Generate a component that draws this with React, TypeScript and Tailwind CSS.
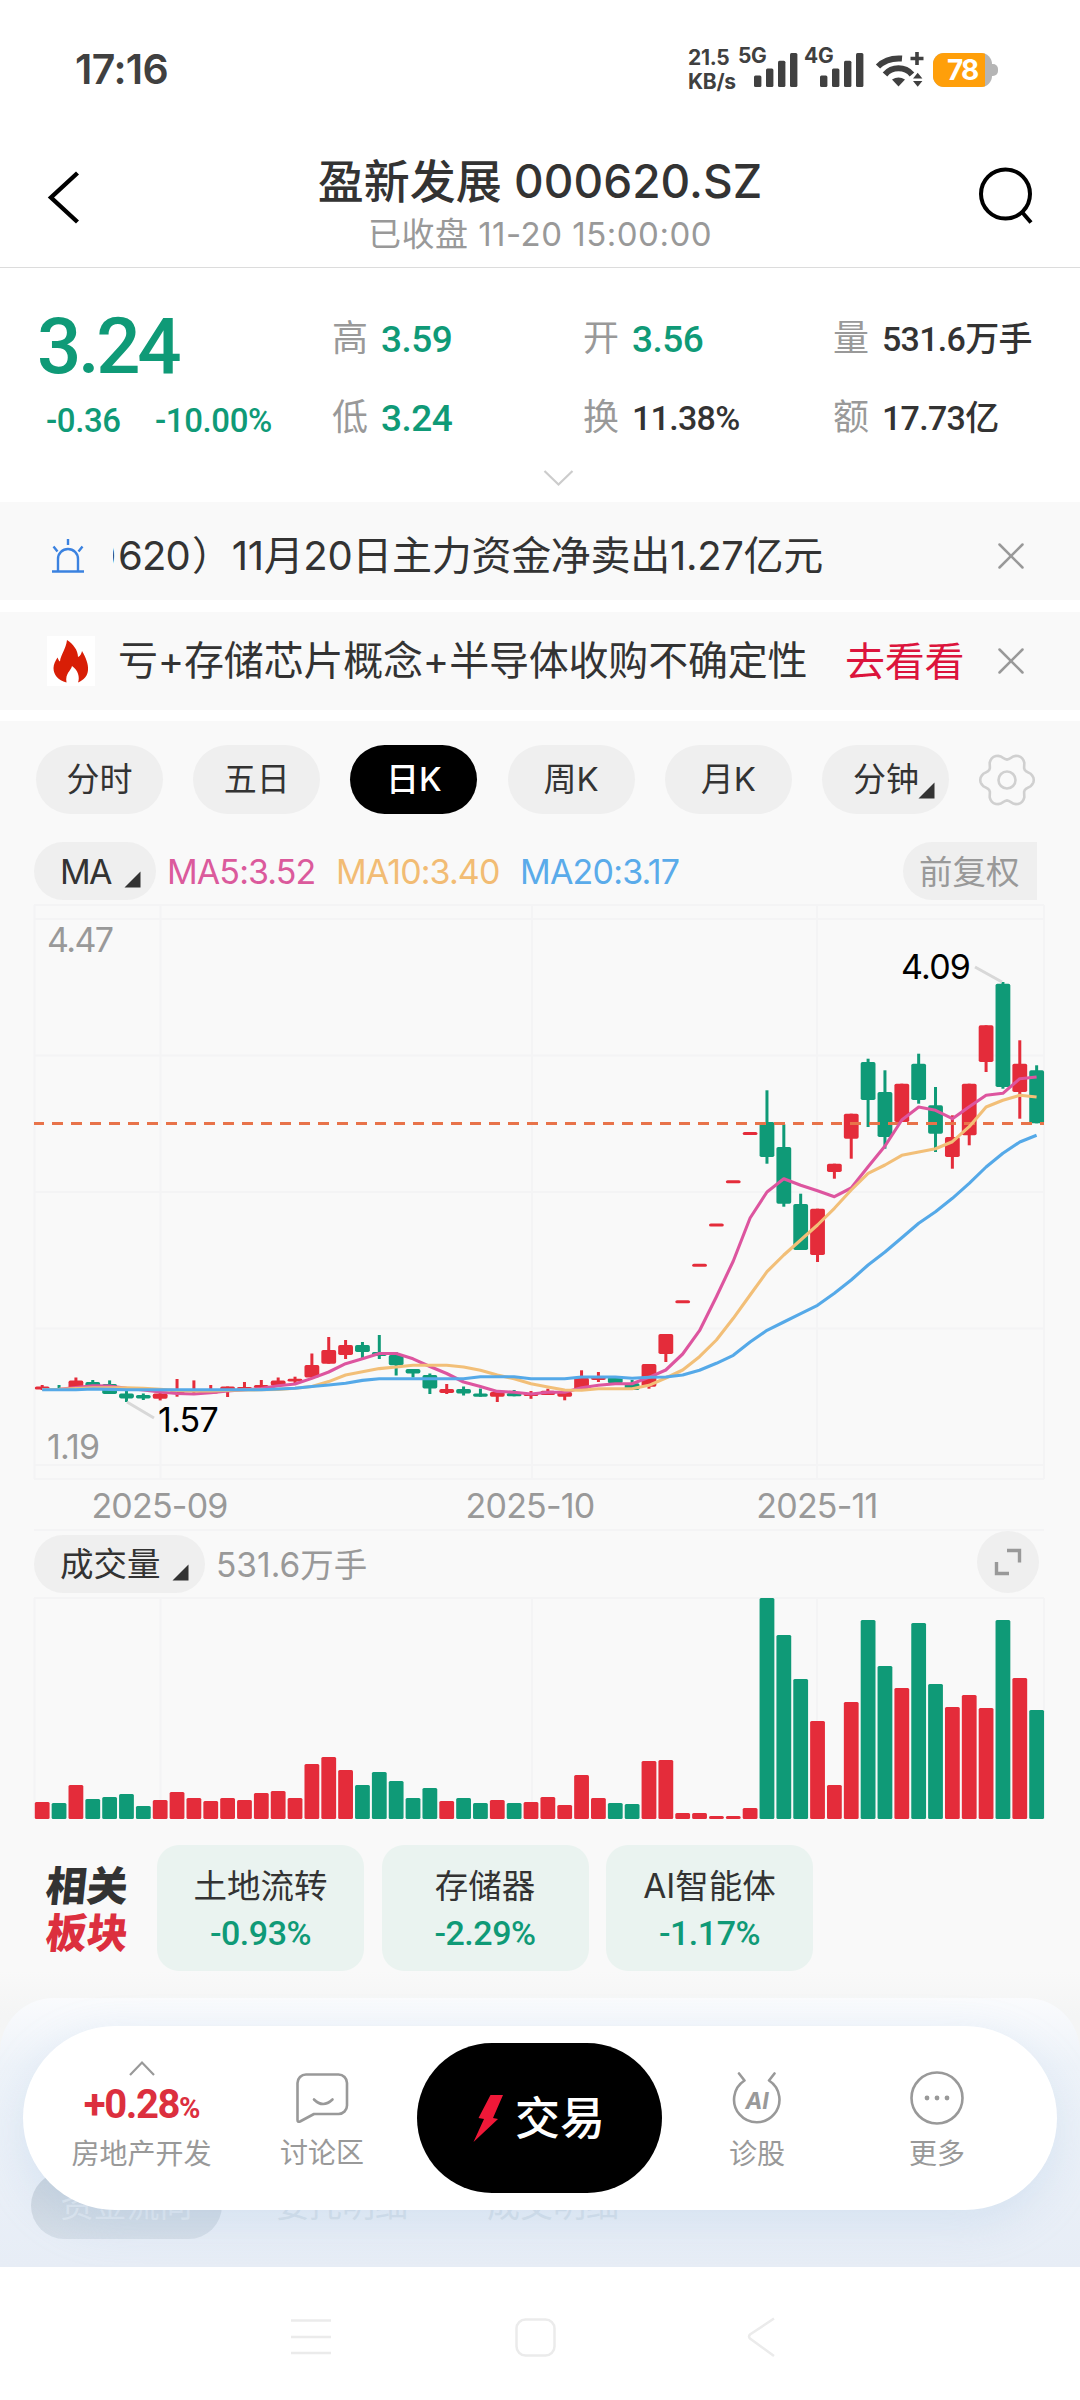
import { X } from "lucide-react"

const UP = "#e42c3a"
const DOWN = "#0f9a77"

// [kind, bodyTop, bodyBottom, high, low]
type Candle = ["r" | "g", number, number, number, number]

const candles: Candle[] = [
    ["r", 1386.5, 1389.5, 1385, 1390],
    ["g", 1388, 1391, 1385, 1391],
    ["r", 1380.4, 1388, 1377.5, 1388],
    ["g", 1382, 1386, 1380, 1387],
    ["g", 1384, 1394, 1380.4, 1394],
    ["g", 1393.5, 1398.4, 1391, 1402],
    ["g", 1395, 1398.4, 1393.5, 1400],
    ["r", 1393.5, 1398.8, 1392, 1400.4],
    ["r", 1391, 1394, 1379, 1396.7],
    ["r", 1390, 1392, 1380.4, 1393],
    ["r", 1390.5, 1393.5, 1385, 1393.5],
    ["r", 1386.5, 1390, 1386.5, 1397],
    ["r", 1387, 1389.5, 1382, 1389.5],
    ["r", 1385, 1388, 1380, 1388],
    ["r", 1380.4, 1385.7, 1377.5, 1386],
    ["r", 1378.8, 1381.6, 1376.7, 1385],
    ["r", 1365, 1377.5, 1353.5, 1377.5],
    ["r", 1350, 1363.7, 1337, 1363.7],
    ["r", 1345, 1355, 1340, 1359],
    ["g", 1345, 1352, 1342, 1358],
    ["g", 1352, 1356, 1335, 1359],
    ["g", 1355, 1365.3, 1352, 1375.5],
    ["g", 1369, 1373.5, 1369, 1377.5],
    ["g", 1375, 1388.6, 1373.5, 1394],
    ["r", 1389, 1393, 1384, 1394],
    ["g", 1389, 1393.5, 1386.5, 1395.5],
    ["g", 1393.5, 1396.7, 1388.6, 1396.7],
    ["r", 1392, 1396.7, 1391, 1402],
    ["g", 1393, 1396.3, 1390, 1396.3],
    ["r", 1393, 1396, 1391, 1398.8],
    ["r", 1390.7, 1395, 1388.7, 1395],
    ["r", 1392, 1396.7, 1392, 1400.3],
    ["r", 1377.7, 1389, 1370.3, 1389],
    ["r", 1377.7, 1380, 1372, 1382],
    ["g", 1377.3, 1383.3, 1377.3, 1383.3],
    ["g", 1383.3, 1390, 1380, 1390],
    ["r", 1364, 1386.7, 1364, 1388.7],
    ["r", 1334, 1354, 1334, 1362],
    ["r", 1300.2, 1303.2, 1301, 1302],
    ["r", 1263.7, 1266.7, 1264, 1265],
    ["r", 1223.6, 1226.6, 1224, 1225],
    ["r", 1180.3, 1183.3, 1181, 1182],
    ["r", 1131.9, 1134.9, 1132, 1133],
    ["g", 1122, 1157, 1090.3, 1163.7],
    ["g", 1147, 1203.7, 1124.3, 1206.7],
    ["g", 1204, 1250, 1193.7, 1250],
    ["r", 1208.7, 1255, 1208.7, 1262],
    ["r", 1163.7, 1172, 1163.7, 1178.7],
    ["r", 1113.7, 1138.7, 1113.7, 1158.7],
    ["g", 1062, 1100, 1058.7, 1127],
    ["g", 1092, 1137, 1070.3, 1148.7],
    ["r", 1083.7, 1122, 1083.7, 1122],
    ["g", 1063.7, 1100, 1053.7, 1103.7],
    ["g", 1105.3, 1133.7, 1087, 1152],
    ["r", 1137, 1157, 1115.3, 1168.7],
    ["r", 1083.7, 1135.3, 1083.7, 1145.3],
    ["r", 1025.3, 1062, 1025.3, 1072],
    ["g", 983.7, 1087, 982, 1088.7],
    ["r", 1063.7, 1092, 1040.3, 1118.7],
    ["g", 1070.3, 1123.3, 1065.3, 1123.3],
]

const ma5 = [
    1389.5, 1389.2, 1387.5, 1385.8, 1386, 1388.3, 1390, 1392, 1393.5, 1394, 1392.6, 1391, 1389.8, 1388.6,
    1385.7, 1384, 1378.4, 1372, 1363.7, 1358.8, 1353.5, 1353.5, 1358.8, 1366.5, 1373.5, 1382, 1386.5, 1391.4,
    1392.2, 1394, 1392.3, 1392.3, 1387.7, 1385.3, 1383.7, 1383.7, 1377.3, 1370, 1354, 1330.7, 1296.7, 1261,
    1218, 1192, 1178.7, 1185.3, 1190.7, 1196.7, 1188, 1166.7, 1146, 1120, 1107, 1110.3, 1118.7, 1106.7,
    1095.3, 1093.3, 1078.7, 1077,
]

const ma10 = [
    1389.5, 1389.3, 1388.5, 1387.7, 1387.7, 1387.8, 1388.2, 1389.4, 1390.5, 1391, 1391, 1390.5, 1390, 1389.8,
    1389.4, 1388.2, 1386.5, 1381.6, 1375, 1371.8, 1368.6, 1367, 1365.3, 1365.3, 1365.3, 1367, 1370.2, 1375,
    1378.8, 1383.7, 1387, 1390, 1390.3, 1388.7, 1388.7, 1388.7, 1385.3, 1378, 1370, 1356.7, 1340, 1318.3,
    1295, 1271.7, 1255, 1240, 1225, 1208.3, 1190, 1173.3, 1165, 1155.3, 1152, 1148.7, 1141.7, 1126.7,
    1107, 1100.3, 1095.3, 1097,
]

const ma20 = [
    1389.8, 1389.8, 1389.8, 1389, 1389.4, 1389.8, 1389.8, 1389.8, 1389.8, 1389.8, 1389.8, 1389.8, 1389.8,
    1389.8, 1389, 1388.2, 1386.5, 1385, 1383.3, 1380.4, 1378.8, 1378.8, 1378.8, 1378.8, 1378.8, 1378.8,
    1376.7, 1376.7, 1376.7, 1378.7, 1378.7, 1378.7, 1377, 1377, 1377, 1378.3, 1377.3, 1377, 1375, 1370.3,
    1363.3, 1355.3, 1342, 1330.3, 1322, 1313.7, 1305.3, 1293.3, 1280, 1265, 1252, 1237.7, 1223.3, 1211.7,
    1198.3, 1183.3, 1167, 1153.3, 1142, 1135.3,
]

const volumes = [
    17, 16, 34, 20, 22, 25, 13, 19, 27, 21, 18, 21, 19, 26, 28, 21, 55, 62, 49, 34, 47, 38, 21, 31, 18, 21, 16,
    19, 16, 17, 22, 14, 44, 21, 16, 15, 58, 59, 6, 6, 3, 3, 11, 221, 184, 140, 98, 34, 117, 199, 153, 131, 196,
    135, 112, 124, 111, 199, 141, 109,
]

const cx = (i: number) => 42.2 + i * 16.855
const linePath = (ys: number[]) => ys.map((y, i) => `${cx(i).toFixed(1)},${y}`).join(" ")

const gearPath =
    Array.from({ length: 72 }, (_, i) => {
        const a = (i / 72) * Math.PI * 2
        const wave = Math.cos(6 * a)
        const r = 24.4 + (wave > 0 ? 2.4 : 4) * wave
        return `${i ? "L" : "M"}${(28 + r * Math.cos(a)).toFixed(1)} ${(28 + r * Math.sin(a)).toFixed(1)}`
    }).join("") + "Z"

const SignalBars = () => (
    <svg width="44" height="34" fill="#404040">
        <rect x="0" y="22.5" width="7.4" height="11.5" rx="1.5" />
        <rect x="12" y="15.5" width="7.4" height="18.5" rx="1.5" />
        <rect x="24" y="7.7" width="7.4" height="26.3" rx="1.5" />
        <rect x="36" y="0" width="7.4" height="34" rx="1.5" />
    </svg>
)

const StatusBar = () => (
    <div className="flex h-[140px] items-center pl-[75px] text-[#404040]">
        <div className="w-[613px] text-[41px] font-semibold tracking-[-0.6px]">17:16</div>
        <div className="w-[50px] text-[21px] font-bold leading-[24px] tracking-[-0.3px]">
            <div>21.5</div>
            <div>KB/s</div>
        </div>
        <div className="flex">
            <div className="-mt-[9px] w-[16px] text-[21px] font-bold leading-[24px] tracking-[-0.3px]">5G</div>
            <SignalBars />
        </div>
        <div className="ml-[6px] flex">
            <div className="-mt-[9px] w-[16px] text-[21px] font-bold leading-[24px] tracking-[-0.3px]">4G</div>
            <SignalBars />
        </div>
        <svg className="ml-[11px]" width="50" height="38" viewBox="0 0 50 38" fill="none" stroke="#404040">
            <path d="M3 15.5 C9 9.5 17 6.8 27 7.6" strokeWidth="6" />
            <path d="M10 23.5 C17 15.3 30 15.3 37 23.5" strokeWidth="6" />
            <path d="M17 28.5 Q23.5 24.5 30 28.5 L23.5 35.5Z" fill="#404040" stroke="none" />
            <path d="M42 1v13M35.5 7.5h13" strokeWidth="3.6" />
            <path d="M38 27.5L42.7 21.8L47.4 27.5ZM38 30L42.7 35.8L47.4 30Z" fill="#404040" stroke="none" />
        </svg>
        <div className="ml-[8px] flex items-center">
            <div className="flex h-[34px] w-[59px] overflow-hidden rounded-[11px] bg-[#b5b5b5]">
                <div className="w-[52px] bg-[#ff9f0a] pl-[14px] text-[28px] font-bold leading-[34px] tracking-[-2px] text-white">
                    78
                </div>
            </div>
            <div className="h-[12px] w-[6px] rounded-r-[5px] bg-[#b5b5b5]" />
        </div>
    </div>
)

const Header = () => (
    <div className="flex h-[128px] border-b border-[#dcdcdc]">
        <svg className="mt-[29px] ml-[44px]" width="40" height="56" fill="none" stroke="#000" strokeWidth="4.4">
            <path d="M33.5 4L7 28.5L33.5 53" />
        </svg>
        <div className="mt-[13px] w-[912px] text-center">
            <div className="text-[46px] font-medium leading-[56px] tracking-[0px] text-[#333]">盈新发展 000620.SZ</div>
            <div className="text-[33px] leading-[50px] tracking-[0.5px] text-[#999]">已收盘 11-20 15:00:00</div>
        </div>
        <svg className="-ml-[19px] mt-[24px]" width="62" height="66" fill="none" stroke="#000" strokeWidth="4">
            <circle cx="28.5" cy="30" r="24.5" />
            <path d="M44.5 47.5L54 58.5" />
        </svg>
    </div>
)

const Stat = ({ label, value, tone }: { label: string; value: string; tone?: "down" }) => (
    <div className="flex h-[48px] items-center">
        <span className="w-[49px] text-[36px] text-[#999]">{label}</span>
        {tone === "down" ? (
            <span className="pt-[2px] font-[Roboto] text-[37px] font-medium tracking-[-0.5px] text-[#0f9a77]">{value}</span>
        ) : (
            <span className="pt-[1px] font-[Roboto,'Noto_Sans_CJK_SC'] text-[34px] font-medium tracking-[-0.7px] text-[#333]">
                {value}
            </span>
        )}
    </div>
)

const Quote = () => (
    <div className="h-[234px]">
        <div className="flex h-[200px] pl-[37px] leading-none">
            <div className="w-[295px] pt-[39px] font-[Roboto] font-medium text-[#0f9a77]">
                <div className="text-[78px] leading-[80px] tracking-[-3.4px]">3.24</div>
                <div className="flex pt-[14px] pl-[9px] text-[33px] leading-[40px] tracking-[-0.4px]">
                    <span className="w-[109px]">-0.36</span>
                    <span>-10.00%</span>
                </div>
            </div>
            <div className="flex w-[251px] flex-col gap-[31px] pt-[46px]">
                <Stat label="高" value="3.59" tone="down" />
                <Stat label="低" value="3.24" tone="down" />
            </div>
            <div className="flex w-[250px] flex-col gap-[31px] pt-[46px]">
                <Stat label="开" value="3.56" tone="down" />
                <Stat label="换" value="11.38%" />
            </div>
            <div className="flex flex-col gap-[31px] pt-[46px]">
                <Stat label="量" value="531.6万手" />
                <Stat label="额" value="17.73亿" />
            </div>
        </div>
        <svg className="ml-[543px]" width="32" height="20" fill="none" stroke="#ccc" strokeWidth="2.2">
            <path d="M1.5 3L15.5 16.5L29.5 3" />
        </svg>
    </div>
)

const CloseIcon = () => <X className="-ml-[9px]" size={46} color="#999" strokeWidth={1.3} />

const Banners = () => (
    <div className="flex flex-col gap-[12px] text-[40px] text-[#333]">
        <div className="flex h-[98px] items-center bg-[#f9f9f9] pt-[9px]">
            <svg className="ml-[50px] w-[63px]" width="36" height="38" fill="none" stroke="#3b82e0" strokeWidth="2.4">
                <path d="M8 34V22a10 10 0 0 1 20 0v12M2 34.5h32M18 2v6M3.5 9.5l4 5M32.5 9.5l-4 5" />
            </svg>
            <div className="flex w-[876px] overflow-hidden whitespace-nowrap leading-[62px]">
                <span className="-ml-[22px] w-[27px]">0</span>
                <span className="w-[74px] tracking-[-0.8px]">620</span>
                <span className="tracking-[-0.3px]">）11月20日主力资金净卖出1.27亿元</span>
            </div>
            <div className="pl-[8px]">
                <CloseIcon />
            </div>
        </div>
        <div className="flex h-[98px] items-center bg-[#f9f9f9]">
            <div className="ml-[47px] flex h-[50px] w-[48px] items-center justify-center bg-white">
                <svg width="36" height="43" viewBox="0 0 36 43" fill="#d81e06">
                    <path d="M14 0 C20 4 25 10 25 17 C27.5 16 28.5 13 29 11 C33 18 35.5 24 35 30 C34.5 36 31 40 25 42.5 C27 37 25 30 19 26 C18 31 12 33 13.5 42.5 C5 40 0.5 35 0.5 28 C0.5 24 2.500 21 4.5 17.5 C5.5 20 6 21 7 21.5 C7.5 15 13 9 14 0Z" />
                </svg>
            </div>
            <div className="ml-[23px] w-[727px] whitespace-nowrap leading-[60px] tracking-[-0.2px]">
                亏+存储芯片概念+半导体收购不确定性
            </div>
            <div className="w-[152px] pt-[2px] tracking-[-0.3px] text-[#dc143c]">去看看</div>
            <CloseIcon />
        </div>
    </div>
)

const Corner = ({ className = "" }: { className?: string }) => (
    <svg className={className} width="17" height="17" fill="#333">
        <path d="M16.5 0.5V16.5H0.5Z" />
    </svg>
)

const tabs = ["分时", "五日", "日K", "周K", "月K", "分钟"]

const Tabs = () => (
    <div className="flex h-[69px] items-center gap-[30.2px] pl-[36px]">
        {tabs.map((tab) => (
            <div
                key={tab}
                className={
                    tab === "日K"
                        ? "flex h-full w-[127px] items-center justify-center rounded-full bg-black pt-[1px] text-[33px] font-medium text-white"
                        : "flex h-full w-[127px] items-center justify-center rounded-full bg-[#efefef] pt-[1px] text-[33px] text-[#333]"
                }
            >
                {tab}
                {tab === "分钟" && <Corner className="-mr-[17px] mt-[20px] -ml-[1px]" />}
            </div>
        ))}
        <svg width="56" height="56" fill="none" stroke="#d0d0d0" strokeWidth="2.6">
            <path d={gearPath} />
            <circle cx="28" cy="28" r="8.5" />
        </svg>
    </div>
)

const Averages = () => (
    <div className="flex h-[58px] items-center pl-[34px] text-[34px]">
        <div className="flex h-full w-[122px] items-center rounded-full bg-[#efefef] pl-[26px] text-[#333]">
            <span className="w-[64px] tracking-[-1.8px]">MA</span>
            <Corner className="mt-[16px]" />
        </div>
        <span className="ml-[11px] w-[169px] tracking-[-0.9px] text-[#db5a9c]">MA5:3.52</span>
        <span className="w-[184px] tracking-[-0.9px] text-[#f2bc74]">MA10:3.40</span>
        <span className="w-[383px] tracking-[-0.8px] text-[#5aabea]">MA20:3.17</span>
        <div className="flex h-full w-[134px] items-center rounded-l-full bg-[#efefef] pt-[2px] pl-[16px] text-[33.5px] text-[#999]">
            前复权
        </div>
    </div>
)

const PriceChart = () => (
    <svg className="mt-[2px] block" width="1080" height="629" viewBox="0 902 1080 629">
        <g stroke="#f4f4f5" strokeWidth="2" fill="none">
            <path d="M34 905H1044M34 919H1044M34 1055.5H1044M34 1192H1044M34 1328.5H1044M34 1465H1044M34 1479H1044M34 1530H1044" />
            <path d="M34.5 905V1479M160.5 905V1479M532 905V1479M817 905V1479M1044 905V1479" />
        </g>
        <g fill="#999" fontSize="34" letterSpacing="-0.8">
            <text x="47" y="951.5" letterSpacing="-1.6">4.47</text>
            <text x="47" y="1458.5">1.19</text>
            <text x="159.5" y="1517.5" textAnchor="middle">2025-09</text>
            <text x="530" y="1517.5" textAnchor="middle">2025-10</text>
            <text x="817" y="1517.5" textAnchor="middle">2025-11</text>
        </g>
        {candles.map(([kind, top, bottom, high, low], i) => (
            <g key={i} fill={kind === "r" ? UP : DOWN}>
                <rect x={cx(i) - 1.5} y={high} width="3" height={low - high} />
                <rect x={cx(i) - 7.4} y={top} width="14.8" height={bottom - top} rx="1.8" />
            </g>
        ))}
        <path d="M34 1123.5H1044" stroke="#e8734a" strokeWidth="3" strokeDasharray="11 8" strokeDashoffset="1" />
        <g fill="none" strokeWidth="3.1" strokeLinejoin="round">
            <polyline points={linePath(ma5)} stroke="#dd559f" />
            <polyline points={linePath(ma10)} stroke="#f2bf78" />
            <polyline points={linePath(ma20)} stroke="#55a9e8" />
        </g>
        <path d="M127 1402L154 1418M975 967L1002 982" stroke="#d8d8d8" strokeWidth="3" />
        <g fill="#000" fontSize="34" letterSpacing="-0.8">
            <text x="158" y="1431.5">1.57</text>
            <text x="901" y="978.5">4.09</text>
        </g>
    </svg>
)

const VolumeChart = () => (
    <div>
        <div className="flex h-[66px] items-start pl-[34px]">
            <div className="mt-[4px] flex h-[58px] w-[171px] items-center rounded-full bg-[#efefef] pt-[1px] pl-[26px] text-[33.5px] text-[#333]">
                <span className="w-[112px]">成交量</span>
                <Corner className="mt-[15px]" />
            </div>
            <div className="mt-[5px] ml-[11px] w-[761px] text-[33.5px] leading-[58px] tracking-[0px] text-[#999]">
                531.6万手
            </div>
            <div className="flex h-[62px] w-[62px] items-center justify-center rounded-full bg-[#efefef]">
                <svg width="28" height="28" fill="none" stroke="#999" strokeWidth="3.4">
                    <path d="M13 2.5H25.5V14.5M2.5 14V25.5H15" />
                </svg>
            </div>
        </div>
        <svg className="block" width="1080" height="224" viewBox="0 1597 1080 224">
            <path
                d="M34 1598H1044M34.5 1598V1819M160.5 1598V1819M532 1598V1819M817 1598V1819M1044 1598V1819"
                stroke="#f4f4f5"
                strokeWidth="2"
            />
            {volumes.map((v, i) => (
                <rect
                    key={i}
                    x={cx(i) - 7.4}
                    y={1819 - v}
                    width="14.8"
                    height={v}
                    rx="1.5"
                    fill={candles[i][0] === "r" ? UP : DOWN}
                />
            ))}
        </svg>
    </div>
)

const sectors = [
    { name: "土地流转", change: "-0.93%" },
    { name: "存储器", change: "-2.29%" },
    { name: "AI智能体", change: "-1.17%" },
]

const Sectors = () => (
    <div className="flex h-[126px] items-center pl-[46px]">
        <div className="w-[111px] pt-[3px] text-[41px] font-black leading-[47px]">
            <div className="-skew-x-6 text-[#333]">相关</div>
            <div className="-skew-x-6 text-[#dc2f3e]">板块</div>
        </div>
        <div className="flex h-full gap-[17.5px]">
            {sectors.map((s) => (
                <div key={s.name} className="flex w-[207px] flex-col items-center rounded-[22px] bg-[#eaf3f0] pt-[17px]">
                    <div className="text-[33.5px] leading-[48px] text-[#333]">{s.name}</div>
                    <div className="font-[Roboto] text-[34px] font-medium leading-[47px] tracking-[-0.5px] text-[#0f9a77]">
                        {s.change}
                    </div>
                </div>
            ))}
        </div>
    </div>
)

const Dock = () => (
    <div className="absolute top-[55px] left-[23px] flex h-[184px] w-[1034px] rounded-full bg-white text-[28px] leading-[40px] text-[#999] shadow-[0_14px_44px_rgba(160,195,225,0.28)]">
        <div className="ml-[38px] flex w-[161px] flex-col items-center pt-[34px]">
            <svg width="28" height="17" fill="none" stroke="#999" strokeWidth="2.2">
                <path d="M2 15L14 2.5L26 15" />
            </svg>
            <div className="pt-[1px] font-[Roboto] text-[40px] font-bold leading-[54px] tracking-[-1.4px] text-[#dc2f3e]">
                +0.28<span className="text-[29px]">%</span>
            </div>
            <div className="-mt-[1px]">房地产开发</div>
        </div>
        <div className="ml-[50px] flex w-[100px] flex-col items-center pt-[45px]">
            <svg width="54" height="54" fill="none" stroke="#999" strokeWidth="2.6" strokeLinecap="round" strokeLinejoin="round">
                <path d="M11 3.5H43.5A8.5 8.5 0 0 1 52 12V34.5A8.5 8.5 0 0 1 43.5 43H19L5 50.5Q2.5 51.5 2.5 49V12A8.5 8.5 0 0 1 11 3.5ZM19 28.5Q28 37.5 37.5 28.5" />
            </svg>
            <div className="mt-[8px]">讨论区</div>
        </div>
        <div className="mt-[17px] ml-[45px] flex h-[150px] w-[245px] items-center rounded-full bg-black pl-[56px]">
            <svg width="31" height="49" fill="#f01838">
                <path d="M17.5 1H30L20 24L25 25L0.5 48L11 25L5.5 24Z" />
            </svg>
            <div className="ml-[11px] pt-[2px] text-[45px] font-medium leading-[60px] text-white">交易</div>
        </div>
        <div className="ml-[45px] flex w-[100px] flex-col items-center pt-[45px]">
            <svg width="54" height="54" fill="none" stroke="#999" strokeWidth="2.6" strokeLinecap="round" strokeLinejoin="round">
                <path d="M9 2.5L14.5 9.5A22.7 22.7 0 1 0 39 9.5L44.5 2.5" />
                <text x="27" y="37.5" textAnchor="middle" fontSize="23" fontWeight="700" fontStyle="italic" fill="#999" stroke="none">
                    AI
                </text>
            </svg>
            <div className="mt-[9px]">诊股</div>
        </div>
        <div className="ml-[80px] flex w-[100px] flex-col items-center pt-[44px]">
            <svg width="56" height="56" fill="none" stroke="#999" strokeWidth="2.6">
                <circle cx="28" cy="28" r="25.5" />
                <g fill="#999" stroke="none">
                    <circle cx="18" cy="28" r="2.4" />
                    <circle cx="28" cy="28" r="2.4" />
                    <circle cx="38" cy="28" r="2.4" />
                </g>
            </svg>
            <div className="mt-[8px]">更多</div>
        </div>
    </div>
)

const BottomArea = () => (
    <div className="relative h-[296px] overflow-hidden bg-gradient-to-b from-[#f9f9f9] to-[#f4f5f5] to-15% pt-[27px]">
        <div className="h-[269px] rounded-t-[54px] bg-gradient-to-b from-[#fafbfd] via-[#eef3f9] via-25% to-[#e7edf6]">
            <div className="flex items-center pt-[174px] pl-[31px] text-[33px] leading-[67px] text-[#d5dfe9]">
                <div className="h-[67px] w-[191px] rounded-full bg-gradient-to-b from-[#c9d2dc] to-[#d5dee8] text-center text-[#dfe6ee]">
                    资金流向
                </div>
                <span className="ml-[54px]">委托明细</span>
                <span className="ml-[79px]">成交明细</span>
            </div>
        </div>
        <Dock />
    </div>
)

const NavBar = () => (
    <div className="flex h-[133px] bg-white pt-[50px]">
        <svg className="ml-[290px]" width="42" height="42" stroke="#ebebeb" strokeWidth="2.5" fill="none">
            <path d="M1 3.5H41M1 20H41M1 36H41" />
        </svg>
        <svg className="ml-[182px]" width="44" height="42" stroke="#ebebeb" strokeWidth="2.5" fill="none">
            <rect x="2.5" y="2.5" width="38" height="36" rx="9" />
        </svg>
        <svg className="ml-[188px]" width="32" height="42" stroke="#ebebeb" strokeWidth="2.5" fill="none">
            <path d="M28 1.5L4 17.5Q2 19.5 4 21.5L28 39" />
        </svg>
    </div>
)

export default function App() {
    return (
        <div className="h-[2400px] w-[1080px] overflow-hidden bg-white font-[Inter,'Noto_Sans_CJK_SC',sans-serif]">
            <StatusBar />
            <Header />
            <Quote />
            <Banners />
            <div className="mt-[11px] bg-[#f9f9f9] pt-[24px]">
                <Tabs />
                <div className="h-[28px]" />
                <Averages />
                <PriceChart />
                <VolumeChart />
                <div className="h-[24px]" />
                <Sectors />
                <BottomArea />
            </div>
            <NavBar />
        </div>
    )
}
